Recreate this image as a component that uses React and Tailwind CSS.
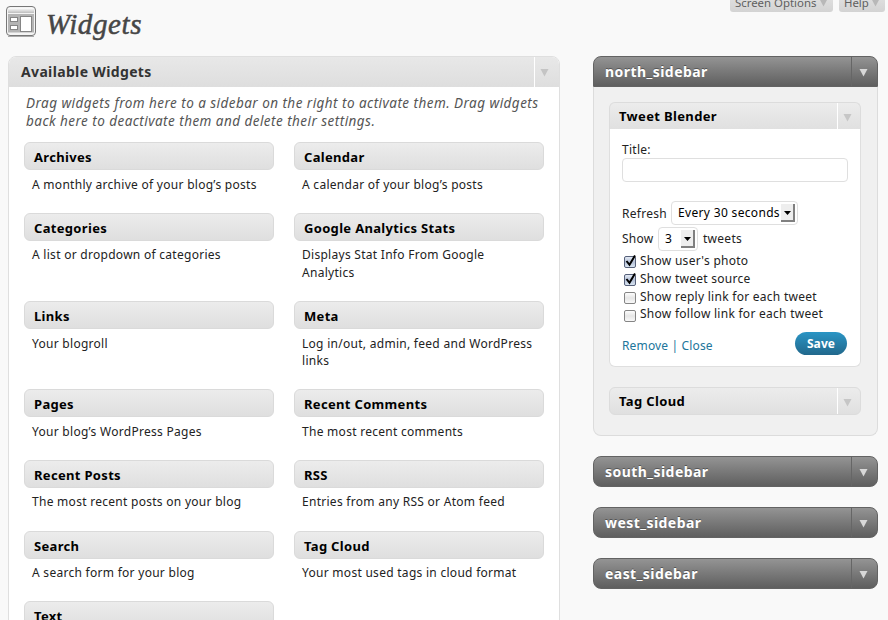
const widgets = [
  ['Archives', 'A monthly archive of your blog’s posts', 'h-[70.6px]'],
  ['Calendar', 'A calendar of your blog’s posts', 'h-[70.6px]'],
  ['Categories', 'A list or dropdown of categories', 'h-[88.2px]'],
  ['Google Analytics Stats', 'Displays Stat Info From Google Analytics', 'h-[88.2px]'],
  ['Links', 'Your blogroll', 'h-[88.2px]'],
  ['Meta', 'Log in/out, admin, feed and WordPress links', 'h-[88.2px]'],
  ['Pages', 'Your blog’s WordPress Pages', 'h-[70.6px]'],
  ['Recent Comments', 'The most recent comments', 'h-[70.6px]'],
  ['Recent Posts', 'The most recent posts on your blog', 'h-[70.6px]'],
  ['RSS', 'Entries from any RSS or Atom feed', 'h-[70.6px]'],
  ['Search', 'A search form for your blog', 'h-[70.6px]'],
  ['Tag Cloud', 'Your most used tags in cloud format', 'h-[70.6px]'],
  ['Text', 'Arbitrary text or HTML', 'h-[70.6px]'],
]

function Triangle({ className }) {
  return (
    <svg width="9" height="9" viewBox="0 0 9 9" className={className}>
      <path d="M0.5 1h8l-4 7.5z" fill="currentColor" />
    </svg>
  )
}

function ScreenTab({ label, className }) {
  return (
    <div className={`flex h-[22px] items-center justify-between rounded-b-[3px] bg-linear-to-b from-[#e6e6e6] to-[#d3d3d3] pt-[3px] pr-[5px] pl-[5px] text-[11.4px] text-[#606060] ${className}`}>
      <span className="whitespace-nowrap">{label}</span>
      <Triangle className="text-[#b8b8b8]" />
    </div>
  )
}

function Widget({ name, text, height }) {
  return (
    <div className={height}>
      <div className="h-7 rounded-md border border-[#dadada] bg-linear-to-b from-[#ececec] to-[#dfdfdf] pl-[9px] text-[13px]/[28.8px] font-bold tracking-[0.32px] text-black">
        {name}
      </div>
      <p className="pt-[5.4px] pl-2 pr-2 text-[12px]/[17.6px] tracking-[0.28px] text-[#222]">{text}</p>
    </div>
  )
}

function SidebarHeader({ name, open }) {
  return (
    <div className={`flex h-[31px] border border-[#636363] bg-linear-to-b from-[#949494] to-[#5f5f5f] ${open ? 'rounded-t-lg' : 'rounded-lg'}`}>
      <div className="flex-1 pl-[11px] text-[14px]/[29px] font-bold tracking-[0.45px] text-white text-shadow-[0_-1px_0_#555]">{name}</div>
      <div className="flex w-[26px] items-center justify-center border-l border-[#666] pt-px pr-[2px]">
        <Triangle className="text-[#d8d8d8]" />
      </div>
    </div>
  )
}

function InnerHeader({ name, open }) {
  return (
    <div className={`flex border border-[#dcdcdc] bg-linear-to-b from-[#ececec] to-[#e0e0e0] ${open ? 'h-[27px] rounded-t-md border-b-0' : 'h-7 rounded-md'}`}>
      <div className="flex-1 pl-[9px] text-[13px]/[27px] font-bold tracking-[0.35px] text-black">{name}</div>
      <div className="flex w-[23px] items-center justify-center border-l border-white pt-0.5 pr-1">
        <Triangle className="text-[#c6c6c6]" />
      </div>
    </div>
  )
}

function Select({ value, className }) {
  return (
    <div className={`flex h-6 items-center justify-between rounded border border-[#dfdfdf] bg-white pl-1.5 pr-0.5 text-black ${className}`}>
      <span className="-mt-0.5 whitespace-nowrap">{value}</span>
      <span className="flex h-[18px] w-[14px] shrink-0 items-center justify-center border-r-2 border-b-2 border-[#808080] bg-[#eee] pt-0.5">
        <svg width="7" height="4" viewBox="0 0 7 4"><path d="M0 0h7L3.5 4z" /></svg>
      </span>
    </div>
  )
}

function Check({ label, checked, className }) {
  return (
    <div className={`flex items-center ${className}`}>
      <svg width="15" height="15" viewBox="0 0 15 15" className="mt-[3px] mr-[3px] shrink-0">
        <defs>
          <linearGradient id="on" x1="0" x2="0" y1="0" y2="1">
            <stop offset="0" stopColor="#e8eef8" /><stop offset=".5" stopColor="#b4c0d6" /><stop offset="1" stopColor="#dce8f4" />
          </linearGradient>
          <linearGradient id="off" x1="0" x2="0" y1="0" y2="1">
            <stop offset="0" stopColor="#fff" /><stop offset=".5" stopColor="#e6e6e6" /><stop offset="1" stopColor="#fafafa" />
          </linearGradient>
        </defs>
        <rect x="2.5" y="2.5" width="11" height="11" rx="1.5" fill={checked ? 'url(#on)' : 'url(#off)'} stroke={checked ? '#566079' : '#858585'} />
        {checked && <path d="M4.5 7l3 3.8L13 1.5" fill="none" stroke="#000" strokeWidth="2" />}
      </svg>
      <span>{label}</span>
    </div>
  )
}

export default function App() {
  return (
    <div className="flex h-[620px] w-[888px] overflow-hidden bg-[#f9f9f9] font-['Noto_Sans',sans-serif]">
      <div className="ml-2 w-[552px] shrink-0">
        <div className="flex h-14">
          <svg width="32" height="34" viewBox="0 0 32 34" className="mt-[5px] -ml-[3px]">
            <defs>
              <linearGradient id="bar" x1="0" x2="0" y1="0" y2="1">
                <stop offset="0" stopColor="#fff" /><stop offset="1" stopColor="#bdbdbd" />
              </linearGradient>
            </defs>
            <path d="M3 31.5h26" stroke="#aaa" />
            <rect x="1.5" y="1.5" width="29" height="29" rx="3.5" fill="#f4f4f4" stroke="#777" />
            <rect x="3" y="3" width="26" height="5" fill="url(#bar)" />
            <rect x="3" y="9" width="26" height="18.5" fill="#b4b4b4" />
            <g fill="#fff" stroke="#858585">
              <rect x="5.5" y="12.5" width="7" height="4" />
              <rect x="5.5" y="20.5" width="7" height="4" />
              <rect x="15.5" y="11.5" width="11" height="15" />
            </g>
          </svg>
          <h1 className="ml-[9px] pt-1 font-['Liberation_Serif',serif] text-[29px]/[40px] font-medium tracking-[0.6px] text-[#464646] italic [-webkit-text-stroke:0.5px_#464646]">Widgets</h1>
        </div>
        <section className="h-[700px] rounded-t-lg border border-[#dfdfdf] bg-white">
          <div className="flex h-[30px] rounded-t-[7px] bg-linear-to-b from-[#e8e8e8] to-[#dedede]">
            <h2 className="flex-1 pl-3 text-[14px]/[30px] font-bold tracking-[0.35px] text-[#333]">Available Widgets</h2>
            <div className="flex w-[25px] items-center justify-center border-l border-white pr-[5px]">
              <Triangle className="text-[#c4c4c4]" />
            </div>
          </div>
          <p className="mt-[7px] pl-[17px] text-[13.5px]/[18px] tracking-[0.455px] whitespace-nowrap text-[#555] italic">
            Drag widgets from here to a sidebar on the right to activate them. Drag widgets<br />
            back here to deactivate them and delete their settings.
          </p>
          <div className="mt-[12.4px] ml-[15px] grid grid-cols-[250px_250px] gap-x-5">
            {widgets.map(([name, text, height], i) => (
              <Widget key={i} name={name} text={text} height={height} />
            ))}
          </div>
        </section>
      </div>

      <div className="ml-[33px] w-[285px] shrink-0">
        <div className="-mr-[7px] flex h-14 justify-end gap-1.5">
          <ScreenTab label="Screen Options" className="-mt-[10px] w-[103px]" />
          <ScreenTab label="Help" className="-mt-[10px] w-[46px]" />
        </div>
        <SidebarHeader name="north_sidebar" open />
        <div className="h-[349px] rounded-b-lg border border-t-0 border-[#dcdcdc] bg-[#f0f0f0] px-[15px] pt-[15px]">
          <div className="w-[252px]">
            <InnerHeader name="Tweet Blender" open />
            <div className="h-[238px] rounded-b-md border border-t-0 border-[#dfdfdf] bg-white px-3 pt-3 text-[12px]/[17px] tracking-[0.27px] text-[#222]">
              <label className="block">Title:</label>
              <div className="h-6 rounded border border-[#dfdfdf] bg-white" />
              <div className="mt-[19px] flex h-6 items-center">
                <span className="w-[49px]">Refresh</span>
                <Select value="Every 30 seconds" className="w-[127px] tracking-[0.33px]" />
              </div>
              <div className="mt-0.5 flex h-6 items-center">
                <span className="-mt-px w-9">Show</span>
                <Select value="3" className="w-10" />
                <span className="-mt-px pl-[5px]">tweets</span>
              </div>
              <div>
                <Check label="Show user's photo" checked className="h-[18px]" />
                <Check label="Show tweet source" checked className="h-[18px]" />
                <Check label="Show reply link for each tweet" className="h-[18px]" />
                <Check label="Show follow link for each tweet" className="h-[17px]" />
              </div>
              <div className="mt-[10px] mr-px flex items-center justify-between text-[#21759b]">
                <span className="pt-1 tracking-[0.15px]">Remove | Close</span>
                <button className="h-[23px] w-[52px] rounded-full bg-linear-to-b from-[#2a95c5] to-[#21688c] text-[12px] font-bold tracking-[0.1px] text-white">Save</button>
              </div>
            </div>
            <div className="mt-5">
              <InnerHeader name="Tag Cloud" />
            </div>
          </div>
        </div>
        <div className="mt-5 flex flex-col gap-5">
          <SidebarHeader name="south_sidebar" />
          <SidebarHeader name="west_sidebar" />
          <SidebarHeader name="east_sidebar" />
        </div>
      </div>
    </div>
  )
}
